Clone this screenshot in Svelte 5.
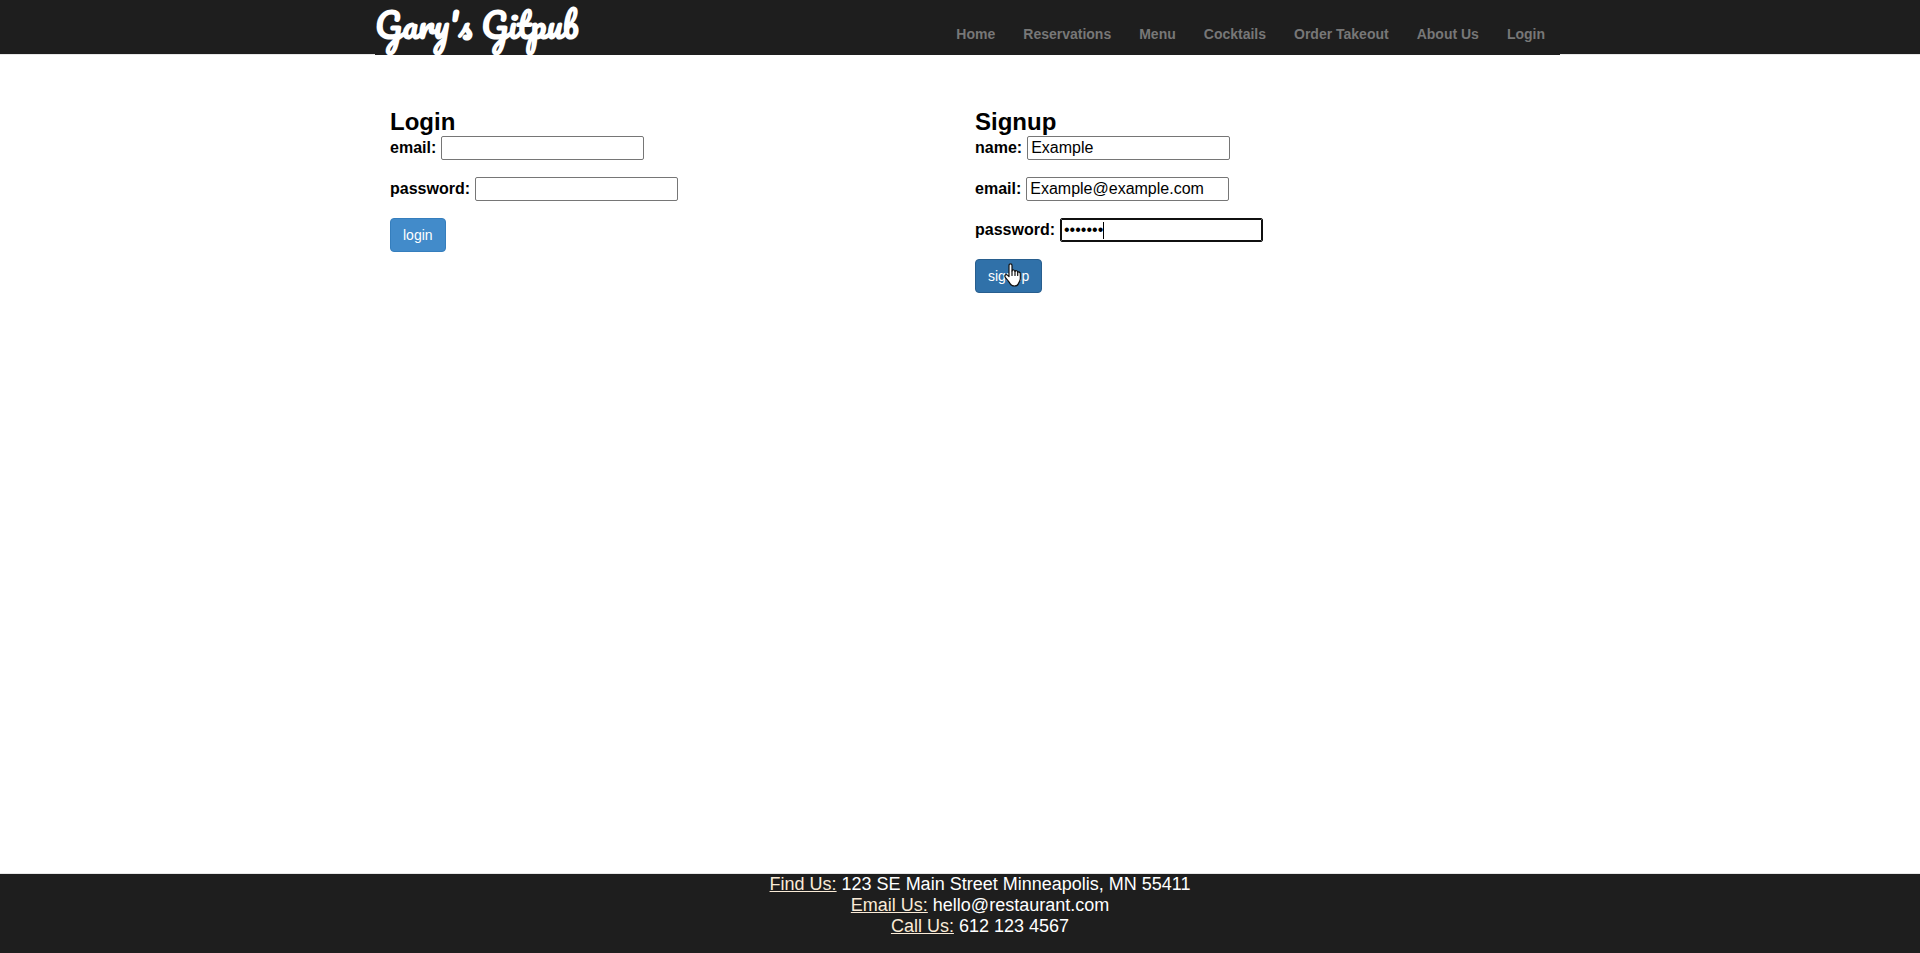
<script>
  import { onMount } from 'svelte';

  const links = ['Home', 'Reservations', 'Menu', 'Cocktails', 'Order Takeout', 'About Us', 'Login'];
  const contacts = [
    { label: 'Find Us:', value: '123 SE Main Street Minneapolis, MN 55411' },
    { label: 'Email Us:', value: 'hello@restaurant.com' },
    { label: 'Call Us:', value: '612 123 4567' }
  ];

  let name = $state('Example');
  let email = $state('Example@example.com');
  let password = $state('example');
  let loginEmail = $state('');
  let loginPassword = $state('');
  let passwordField;

  onMount(() => passwordField.focus());
</script>

<div class="page">
  <header>
    <div class="container">
      <nav class="navbar">
        <a class="brand" href="#home">Gary's Gitpub</a>
        <ul>
          {#each links as link}
            <li><a href="#{link}">{link}</a></li>
          {/each}
        </ul>
      </nav>
    </div>
  </header>

  <main class="container">
    <form onsubmit={(e) => e.preventDefault()}>
      <h2>Login</h2>
      <div class="field">
        <label for="login-email">email:</label>
        <input id="login-email" type="text" bind:value={loginEmail} />
      </div>
      <div class="field">
        <label for="login-password">password:</label>
        <input id="login-password" type="password" bind:value={loginPassword} />
      </div>
      <button type="submit">login</button>
    </form>

    <form onsubmit={(e) => e.preventDefault()}>
      <h2>Signup</h2>
      <div class="field">
        <label for="signup-name">name:</label>
        <input id="signup-name" type="text" bind:value={name} />
      </div>
      <div class="field">
        <label for="signup-email">email:</label>
        <input id="signup-email" type="text" bind:value={email} />
      </div>
      <div class="field">
        <label for="signup-password">password:</label>
        <span class="active">
          <input id="signup-password" type="password" bind:value={password} bind:this={passwordField} />
          <i class="caret"></i>
        </span>
      </div>
      <button class="hovered" type="submit">
        signup
        <svg class="pointer" width="17" height="24" viewBox="0 0 17 24" aria-hidden="true">
          <path d="M5 13.500V2.500C5 .2 8 .2 8 2.500V8C8.400 6.400 11 6.800 11 8.400C11.600 7.200 13.700 7.700 13.700 9.200C14.600 8.500 16.300 9.200 16.300 10.700V15.500C16.300 18 15 19 14.500 20.500C13.500 23.800 7.500 23.800 6 20.500C5 18.300 2.800 16.500 1.300 14.300C0 12.300 2 11 3.400 12.100Z" fill="#fff" stroke="#111" stroke-width="1.200" stroke-linejoin="round" />
          <path d="M8 8v4.500M11 8.400v4.100M13.700 9.200v3.300" fill="none" stroke="#111" stroke-width="1.200" stroke-linecap="round" />
        </svg>
      </button>
    </form>
  </main>

  <footer>
    {#each contacts as item}
      <p><span>{item.label}</span> {item.value}</p>
    {/each}
  </footer>
</div>

<style>
  :global(body) {
    margin: 0;
    background: #fff;
  }

  .page {
    display: flex;
    flex-direction: column;
    min-height: 100vh;
    font-family: "Liberation Sans", Arial, sans-serif;
    font-size: 16px;
    color: #000;
  }

  .container {
    width: 100%;
    max-width: 1170px;
    margin: 0 auto;
  }

  header {
    box-sizing: border-box;
    height: 55px;
    border-bottom: 1px solid #e7e7e7;
    background: #1e1e1e;
  }

  .navbar {
    display: flex;
    justify-content: space-between;
    height: 55px;
    margin-right: -15px;
    background: #1e1e1e;
  }

  .brand {
    color: #fff;
    font: bold 34px/50px Pacifico, cursive;
    text-decoration: none;
    white-space: nowrap;
  }

  ul {
    display: flex;
    margin: 0;
    padding: 24px 1px 0 0;
    list-style: none;
  }

  li a {
    display: block;
    padding: 0 14px;
    color: #777;
    font-size: 14px;
    font-weight: bold;
    line-height: 20px;
    text-decoration: none;
    white-space: nowrap;
  }

  main {
    display: grid;
    grid-template-columns: 1fr 1fr;
    flex: 1;
    align-items: start;
    padding-top: 53px;
  }

  form {
    padding: 0 15px;
  }

  h2 {
    margin: 0;
    font-size: 24px;
    line-height: 28px;
  }

  .field {
    display: flex;
    align-items: center;
    gap: 5px;
    height: 24px;
    margin-bottom: 17px;
  }

  label {
    font-weight: bold;
    line-height: 20px;
  }

  input {
    box-sizing: border-box;
    display: block;
    width: 203px;
    height: 24px;
    padding: 1px 3px;
    border: 1px solid #767676;
    border-radius: 2px;
    background: #fff;
    color: #000;
    font: inherit;
  }

  .active {
    position: relative;
  }

  .active input {
    outline: 1px solid #101010;
    outline-offset: -2px;
    border-color: #101010;
    caret-color: transparent;
  }

  .caret {
    position: absolute;
    top: 4px;
    left: 43px;
    width: 1px;
    height: 17px;
    background: #000;
  }

  button {
    position: relative;
    box-sizing: border-box;
    height: 34px;
    padding: 0 12px;
    border: 1px solid #357ebd;
    border-radius: 4px;
    background: #428bca;
    color: #fff;
    font: 14px/20px "Liberation Sans", Arial, sans-serif;
    cursor: pointer;
  }

  .hovered {
    border-color: #285e8e;
    background: #3071a9;
  }

  .pointer {
    position: absolute;
    top: 3px;
    left: 28px;
  }

  footer {
    box-sizing: border-box;
    height: 80px;
    padding-left: 40px;
    border-top: 1px solid #e7e7e7;
    background: #1e1e1e;
    color: #fff;
    font-size: 18px;
    line-height: 21px;
    text-align: center;
  }

  footer p {
    margin: 0;
  }

  footer span {
    color: #faebd7;
    text-decoration: underline;
  }
</style>
